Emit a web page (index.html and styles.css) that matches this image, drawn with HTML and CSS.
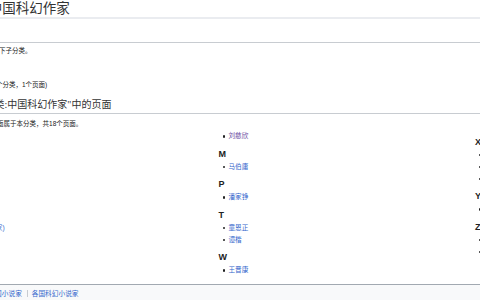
FILE: index.html
```html
<!DOCTYPE html>
<html lang="zh">
<head>
    <meta charset="UTF-8">
    <meta name="viewport" content="width=device-width, initial-scale=1.0">
    <title>分类:中国科幻作家</title>
    <link rel="stylesheet" href="styles.css">
</head>
<body>

<div class="content">
    <h1 class="page-title">分类:中国科幻作家</h1>
    <div class="cat-desc"></div>

    <div class="subcats">
        <p class="intro">本分类只有以下子分类。</p>
        <p class="subcat-entry">科幻作家 (1个分类，1个页面)</p>
    </div>

    <h2 class="pages-title">"分类:中国科幻作家"中的页面</h2>
    <p class="intro pages-intro">以下18个页面属于本分类，共18个页面。</p>

    <div class="columns">
        <div class="col">
            <ul><li><a href="#">阿缺</a></li></ul>
            <h3>B</h3>
            <ul><li><a href="#">宝树</a></li></ul>
            <h3>C</h3>
            <ul><li><a href="#">陈楸帆</a></li></ul>
            <h3>H</h3>
            <ul>
                <li><a href="#">韩松 (作家)</a></li>
                <li><a href="#">郝景芳</a></li>
            </ul>
            <h3>J</h3>
            <ul><li><a href="#">江波</a></li></ul>
        </div>
        <div class="col">
            <ul><li><a href="#" class="visited">刘慈欣</a></li></ul>
            <h3>M</h3>
            <ul><li><a href="#">马伯庸</a></li></ul>
            <h3>P</h3>
            <ul><li><a href="#">潘家铮</a></li></ul>
            <h3>T</h3>
            <ul>
                <li><a href="#">童恩正</a></li>
                <li><a href="#">谭楷</a></li>
            </ul>
            <h3>W</h3>
            <ul><li><a href="#">王晋康</a></li></ul>
        </div>
        <div class="col">
            <h3>X</h3>
            <ul>
                <li><a href="#">夏笳</a></li>
                <li><a href="#">星河</a></li>
                <li><a href="#">萧星寒</a></li>
            </ul>
            <h3>Y</h3>
            <ul><li><a href="#">杨鹏</a></li></ul>
            <h3>Z</h3>
            <ul>
                <li><a href="#">郑文光</a></li>
                <li><a href="#">张冉</a></li>
            </ul>
        </div>
    </div>

    <div class="catlinks">
        <span class="cat-label">分类：</span>
        <ul>
            <li><a href="#">中国小说家</a></li>
            <li><a href="#">各国科幻小说家</a></li>
        </ul>
    </div>
</div>

</body>
</html>
```

FILE: styles.css
```css
html, body {
    margin: 0;
    padding: 0;
    overflow: hidden;
}
body {
    font-family: "Liberation Sans", "Noto Sans CJK SC", sans-serif;
    color: #202122;
    background-color: #fff;
}
a {
    color: #3366cc;
    text-decoration: none;
}
a.visited {
    color: #6b4ba1;
}
.content {
    margin-left: -40px;
    width: 820px;
}
.page-title {
    margin: 0;
    text-indent: -2px;
    font-family: "Liberation Serif", "Noto Sans CJK SC", serif;
    font-weight: normal;
    font-size: 13.5px;
    line-height: 17px;
    color: #333;
    border-bottom: 2px solid #eaecf0;
}
.cat-desc {
    height: 23px;
    border-bottom: 1px solid #c8ccd1;
}
.intro {
    margin: 3px 0 0;
    font-size: 6.5px;
    line-height: 9px;
}
.subcat-entry {
    margin: 24.5px 0 0;
    padding-left: 2.4px;
    font-size: 6.5px;
    line-height: 9px;
}
.pages-title {
    margin: 8.5px 0 0;
    padding-left: 20.5px;
    font-family: "Liberation Serif", "Noto Sans CJK SC", serif;
    font-weight: normal;
    font-size: 10px;
    line-height: 16px;
    color: #333;
    border-bottom: 1px solid #c8ccd1;
}
.pages-intro {
    margin-top: 4.5px;
    padding-left: 3.8px;
}
.columns {
    display: flex;
    margin-top: 2.5px;
    padding-left: 2px;
}
.col {
    flex: none;
    width: 256.5px;
}
.col h3 {
    margin: 5.5px 0 1px;
    font-size: 9px;
    line-height: 12px;
    font-weight: bold;
}
.col ul {
    margin: 0;
    padding: 0;
    list-style: none;
}
.col li {
    font-size: 6.6px;
    line-height: 12px;
    padding-left: 4px;
}
.col li::before {
    content: "";
    display: inline-block;
    width: 2.5px;
    height: 2.5px;
    margin-right: 3.5px;
    border-radius: 50%;
    background-color: #202122;
    vertical-align: middle;
}
.catlinks {
    margin-top: 7.5px;
    padding: 4px 5.5px;
    border: 1px solid #a2a9b1;
    background-color: #f8f9fa;
    font-size: 6.7px;
    line-height: 9px;
    height: 30px;
}
.catlinks ul {
    display: inline;
    margin: 0;
    padding: 0;
}
.catlinks li {
    display: inline;
    padding: 0 3.5px;
}
.catlinks li:first-child {
    padding-left: 0;
}
.catlinks li + li {
    border-left: 1px solid #c8ccd1;
}
```
